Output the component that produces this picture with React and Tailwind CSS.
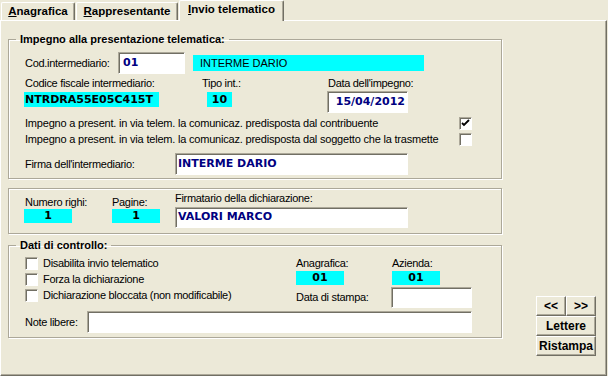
import React from 'react';

const sunken =
  'bg-white border border-t-[#aca899] border-l-[#aca899] border-r-white border-b-white shadow-[inset_1px_1px_0_#716f64]';
const etched = 'border border-[#aca899] shadow-[inset_1px_1px_0_#fff,1px_1px_0_#fff]';
const raised =
  'bg-[#ece9d8] border border-t-white border-l-white border-r-[#716f64] border-b-[#716f64] shadow-[inset_-1px_-1px_0_#aca899]';
const label = 'text-[11px] leading-[13px] tracking-[-0.3px] whitespace-nowrap';
const longLabel = 'text-[11px] leading-[13px] tracking-[-0.2px] whitespace-nowrap';
const navy = "font-['DejaVu_Sans',sans-serif] font-bold text-[11px] text-[#000080]";
const cyanBold = "bg-[#00ffff] font-['DejaVu_Sans',sans-serif] font-bold text-[11px] text-black";

const Tab = ({ first, rest, active, className }) => (
  <div
    className={`flex items-center justify-center font-bold text-[11.5px] border-l border-t border-white border-r border-r-[#716f64] rounded-t-[2px] shadow-[inset_-1px_0_0_#aca899] ${
      active ? 'h-[21px] -mb-px relative z-10 bg-[#ece9d8] pb-[2px]' : 'h-[18px] pt-px'
    } ${className}`}
  >
    <span>
      <span className="underline">{first}</span>
      {rest}
    </span>
  </div>
);

const Check = ({ checked }) => (
  <div className={`${sunken} w-[13px] h-[13px] flex items-center justify-center shrink-0`}>
    {checked && (
      <svg width="9" height="9" viewBox="0 0 9 9">
        <path d="M1 4 L3 6 L8 1" stroke="#000" strokeWidth="1.8" fill="none" />
      </svg>
    )}
  </div>
);

const Button = ({ children, className }) => (
  <div className={`${raised} h-[20px] flex items-center justify-center font-bold text-[12px] ${className}`}>
    {children}
  </div>
);

export default function App() {
  return (
    <div className="w-[608px] h-[376px] bg-[#ece9d8] flex flex-col font-['Liberation_Sans',Arial,sans-serif] text-black overflow-hidden">
      {/* tabs */}
      <div className="h-[20px] flex items-end pl-[1px]">
        <Tab first="A" rest="nagrafica" className="w-[74px]" />
        <Tab first="R" rest="appresentante" className="w-[102px] ml-[1px]" />
        <Tab first="I" rest="nvio telematico" active className="w-[105px] ml-[1px]" />
      </div>

      {/* page */}
      <div className="flex-1 w-[607px] flex border-l border-t border-white border-r border-b border-r-[#716f64] border-b-[#716f64] shadow-[inset_-1px_-1px_0_#aca899]">
        <div className="pl-[7px] flex flex-col">
          {/* Impegno */}
          <fieldset className={`${etched} w-[494px] h-[146px] mt-[12px]`}>
            <legend className="ml-[7px] px-[4px] font-bold text-[11px] leading-[13px]">
              Impegno alla presentazione telematica:
            </legend>
            <div className="flex items-center h-[22px] mt-[6px] pl-[16px]">
              <span className={`${label} w-[93px]`}>Cod.intermediario:</span>
              <div className={`${sunken} ${navy} w-[67px] h-[22px] pl-[4px] flex items-center`}>01</div>
              <div className="ml-[8px] w-[231px] h-[16px] bg-[#00ffff] text-[11px] leading-[16px] pl-[7px]">
                INTERME DARIO
              </div>
            </div>
            <div className="flex mt-[3px] pl-[16px]">
              <span className={`${label} w-[177px]`}>Codice fiscale intermediario:</span>
              <span className={`${label} w-[126px]`}>Tipo int.:</span>
              <span className={label}>Data dell'impegno:</span>
            </div>
            <div className="flex items-start">
              <div className={`${cyanBold} ml-[15px] mt-[2px] w-[135px] h-[15px] leading-[15px] pl-px`}>
                NTRDRA55E05C415T
              </div>
              <div className={`${cyanBold} ml-[48px] mt-[2px] w-[25px] h-[15px] leading-[15px] text-center`}>10</div>
              <div className={`${sunken} ${navy} ml-[95px] mt-px w-[81px] h-[22px] pr-[2px] flex items-center justify-end`}>
                15/04/2012
              </div>
            </div>
            <div className="mt-[2px] pl-[16px]">
              <div className="flex items-center h-[16px]">
                <span className={`${longLabel} w-[434px]`}>
                  Impegno a present. in via telem. la comunicaz. predisposta dal contribuente
                </span>
                <Check checked />
              </div>
              <div className="flex items-center h-[16px]">
                <span className={`${longLabel} w-[434px]`}>
                  Impegno a present. in via telem. la comunicaz. predisposta dal soggetto che la trasmette
                </span>
                <Check />
              </div>
            </div>
            <div className="flex items-center h-[22px] mt-[6px] pl-[16px]">
              <span className={`${label} w-[150px]`}>Firma dell'intermediario:</span>
              <div className={`${sunken} ${navy} w-[233px] h-[22px] pl-[2px] flex items-center`}>INTERME DARIO</div>
            </div>
          </fieldset>

          {/* righi / firmatario */}
          <div className={`${etched} w-[494px] h-[46px] mt-[9px] flex items-start pl-[15px]`}>
            <div className="w-[48px] mt-[7px]">
              <div className={`${label} pl-px`}>Numero righi:</div>
              <div className={`${cyanBold} h-[14px] leading-[14px] text-center`}>1</div>
            </div>
            <div className="w-[48px] ml-[40px] mt-[7px]">
              <div className={label}>Pagine:</div>
              <div className={`${cyanBold} h-[14px] leading-[14px] text-center`}>1</div>
            </div>
            <div className="ml-[15px] mt-[3px]">
              <div className={label}>Firmatario della dichiarazione:</div>
              <div className={`${sunken} ${navy} mt-[2px] w-[233px] h-[21px] pl-[2px] flex items-center`}>VALORI MARCO</div>
            </div>
          </div>

          {/* Dati di controllo */}
          <fieldset className={`${etched} w-[494px] h-[99px] mt-[5px]`}>
            <legend className="ml-[7px] px-[4px] font-bold text-[11px] leading-[13px]">Dati di controllo:</legend>
            <div className="flex items-start">
              <div className="w-[287px] pl-[16px] mt-[3px]">
                {['Disabilita invio telematico', 'Forza la dichiarazione', 'Dichiarazione bloccata (non modificabile)'].map(
                  (t) => (
                    <div key={t} className="flex items-center h-[16px]">
                      <Check />
                      <span className={`${label} ml-[5px]`}>{t}</span>
                    </div>
                  )
                )}
              </div>
              <div className="mt-[5px]">
                <div className="flex">
                  <span className={`${label} w-[96px]`}>Anagrafica:</span>
                  <span className={label}>Azienda:</span>
                </div>
                <div className="flex mt-px">
                  <div className={`${cyanBold} w-[48px] h-[14px] leading-[14px] text-center`}>01</div>
                  <div className={`${cyanBold} ml-[48px] w-[48px] h-[14px] leading-[14px] text-center`}>01</div>
                </div>
                <div className="flex items-center mt-[2px]">
                  <span className={`${label} w-[95px]`}>Data di stampa:</span>
                  <div className={`${sunken} w-[81px] h-[21px]`} />
                </div>
              </div>
            </div>
            <div className="flex items-center h-[22px] mt-[3px] pl-[16px]">
              <span className={`${label} w-[62px]`}>Note libere:</span>
              <div className={`${sunken} w-[385px] h-[22px]`} />
            </div>
          </fieldset>
        </div>

        {/* buttons */}
        <div className="ml-[34px] w-[60px] flex flex-col justify-end pb-[19px]">
          <div className="flex">
            <Button className="w-[30px]">&lt;&lt;</Button>
            <Button className="w-[30px]">&gt;&gt;</Button>
          </div>
          <Button className="w-[60px]">Lettere</Button>
          <Button className="w-[60px]">Ristampa</Button>
        </div>
      </div>
    </div>
  );
}
